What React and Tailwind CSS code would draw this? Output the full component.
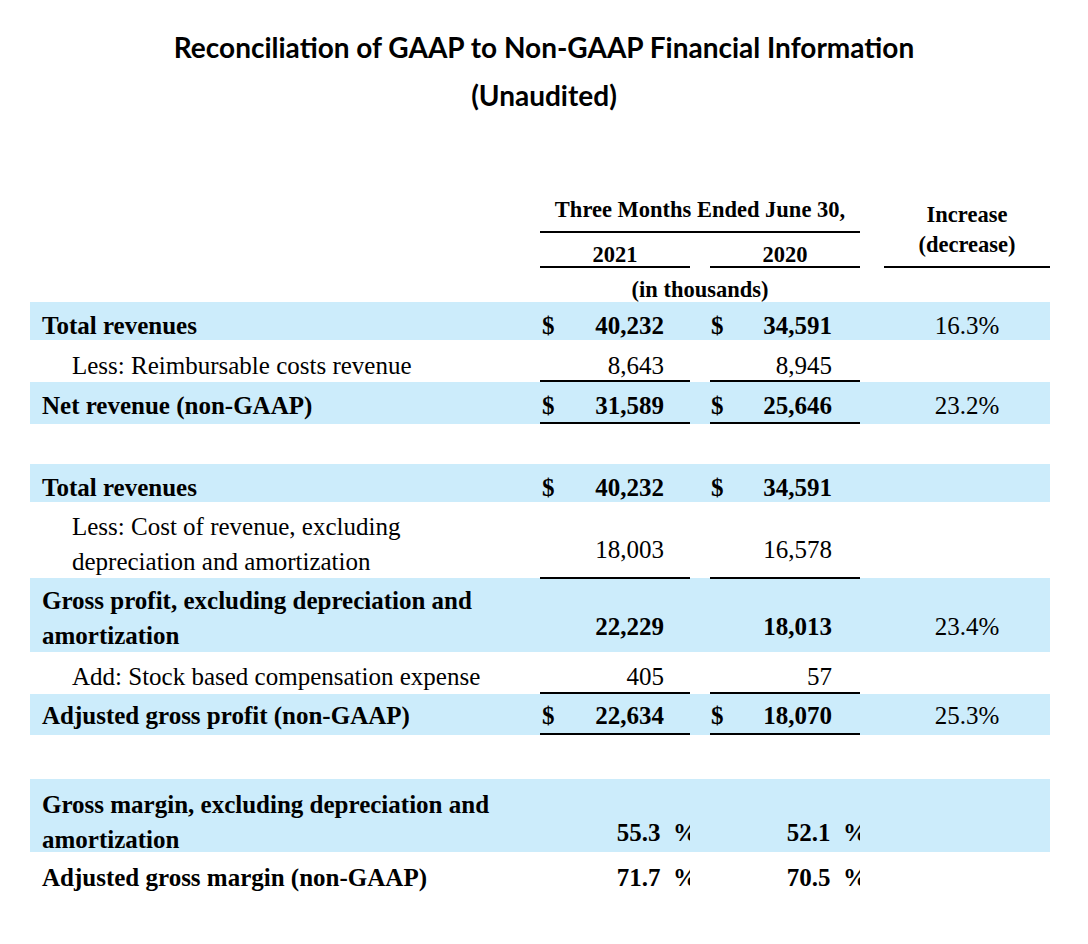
import React from 'react';

const cols = 'grid grid-cols-[510px_150px_20px_150px_24px_166px]';
const serif = { fontFamily: '"Liberation Serif", "Times New Roman", serif' };

function Money({ dollar, value, bold, line, pb = 0, col = 1 }) {
  return (
    <div
      className={`flex items-end justify-between h-full leading-[28px] ${bold ? 'font-bold' : ''} ${line ? 'border-b-2 border-black' : ''} ${col === 1 ? 'pl-[2px] pr-[26px]' : 'pl-[1px] pr-[28px]'}`}
      style={{ paddingBottom: pb }}
    >
      <span>{dollar ? '$' : ''}</span>
      <span>{value}</span>
    </div>
  );
}

function Row({ blue, h, label, labelPb = 0, labelPt, indent, bold, a, b, pct, pctPb = 0 }) {
  return (
    <div className={`${cols} ${blue ? 'bg-[#ccecfb]' : ''}`} style={{ height: h }}>
      <div
        className={`flex flex-col h-full ${labelPt !== undefined ? 'justify-start leading-[35px]' : 'justify-end leading-[28px]'} ${indent ? 'pl-[42px]' : 'pl-3'} ${bold ? 'font-bold' : ''}`}
        style={labelPt !== undefined ? { paddingTop: labelPt } : { paddingBottom: labelPb }}
      >
        {label}
      </div>
      {a}
      <div />
      {b}
      <div />
      <div className="flex items-end justify-center h-full leading-[28px]" style={{ paddingBottom: pctPb }}>
        {pct}
      </div>
    </div>
  );
}

// the % sign is cut by the column edge, as in the printed table
function Margin({ value, pb }) {
  return (
    <div className="flex flex-col justify-end h-full overflow-hidden font-bold leading-[28px]" style={{ paddingBottom: pb }}>
      <div className="text-right whitespace-pre -mr-[8px]">{value}{'\u00a0\u00a0%'}</div>
    </div>
  );
}

export default function App() {
  return (
    <div className="w-[1088px] h-[944px] bg-white text-black overflow-hidden">
      <div
        className="pt-[23px] text-center font-bold text-[28px] leading-[48px]"
        style={{ fontFamily: 'Lato, "Open Sans", sans-serif' }}
      >
        <div>Reconciliation of GAAP to Non-GAAP Financial Information</div>
        <div>(Unaudited)</div>
      </div>

      <div className="ml-[30px] mt-[71px] w-[1020px] text-[25px]" style={serif}>
        {/* header */}
        <div className={`${cols} grid-rows-[43px_35px_34px] text-[22.5px] font-bold`}>
          <div className="row-span-3" />
          <div className="col-span-3 flex items-end justify-center border-b-2 border-black pb-[7px] leading-[28px]">
            Three Months Ended June 30,
          </div>
          <div className="row-span-2" />
          <div className="row-span-2 col-start-6 flex flex-col items-center border-b-2 border-black pt-[10px] leading-[30px]">
            <span>Increase</span>
            <span>(decrease)</span>
          </div>
          <div className="col-start-2 flex items-end justify-center border-b-2 border-black leading-[22px]">2021</div>
          <div className="col-start-4 flex items-end justify-center border-b-2 border-black leading-[22px]">2020</div>
          <div className="col-start-2 col-span-3 flex items-end justify-center leading-[24px]">(in thousands)</div>
        </div>

        <Row
          blue
          h={38}
          bold
          label="Total revenues"
          a={<Money dollar bold value="40,232" />}
          b={<Money dollar bold col={2} value="34,591" />}
          pct="16.3%"
        />
        <Row
          h={42}
          indent
          label="Less: Reimbursable costs revenue"
          labelPb={2}
          a={<Money line value="8,643" />}
          b={<Money line col={2} value="8,945" />}
        />
        <Row
          blue
          h={42}
          bold
          label="Net revenue (non-GAAP)"
          labelPb={4}
          a={<Money dollar bold line pb={2} value="31,589" />}
          b={<Money dollar bold line pb={2} col={2} value="25,646" />}
          pct="23.2%"
          pctPb={4}
        />

        <div className="h-[40px]" />

        <Row
          blue
          h={38}
          bold
          label="Total revenues"
          a={<Money dollar bold value="40,232" />}
          b={<Money dollar bold col={2} value="34,591" />}
        />
        <Row
          h={76}
          indent
          labelPt={7}
          label={
            <>
              <span>Less: Cost of revenue, excluding</span>
              <span>depreciation and amortization</span>
            </>
          }
          a={<Money line pb={13} value="18,003" />}
          b={<Money line pb={13} col={2} value="16,578" />}
        />
        <Row
          blue
          h={74}
          bold
          labelPt={5}
          label={
            <>
              <span>Gross profit, excluding depreciation and</span>
              <span>amortization</span>
            </>
          }
          a={<Money bold pb={12} value="22,229" />}
          b={<Money bold pb={12} col={2} value="18,013" />}
          pct="23.4%"
          pctPb={12}
        />
        <Row
          h={42}
          indent
          label="Add: Stock based compensation expense"
          labelPb={3}
          a={<Money line pb={1} value="405" />}
          b={<Money line pb={1} col={2} value="57" />}
        />
        <Row
          blue
          h={41}
          bold
          label="Adjusted gross profit (non-GAAP)"
          labelPb={5}
          a={<Money dollar bold line pb={3} value="22,634" />}
          b={<Money dollar bold line pb={3} col={2} value="18,070" />}
          pct="25.3%"
          pctPb={5}
        />

        <div className="h-[44px]" />

        <Row
          blue
          h={73}
          bold
          labelPt={8}
          label={
            <>
              <span>Gross margin, excluding depreciation and</span>
              <span>amortization</span>
            </>
          }
          a={<Margin pb={10} value="55.3" />}
          b={<Margin pb={10} value="52.1" />}
        />
        <Row
          h={48}
          bold
          label="Adjusted gross margin (non-GAAP)"
          labelPb={8}
          a={<Margin pb={8} value="71.7" />}
          b={<Margin pb={8} value="70.5" />}
        />
      </div>
    </div>
  );
}
